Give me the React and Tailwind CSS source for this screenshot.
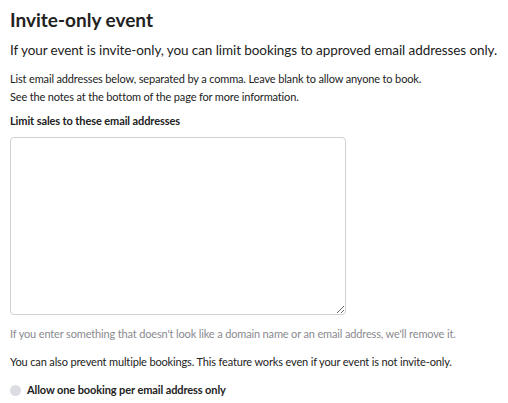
import React from 'react';

export default function App() {
  return (
    <div className="bg-white min-h-[403px] px-[10px] pt-[8px] text-[#222]" style={{ fontFamily: 'Lato, "Noto Sans", sans-serif' }}>
      <h1 className="text-[19px] font-bold leading-[24px] text-[#222]">Invite-only event</h1>
      <p className="mt-[8px] text-[13.5px] leading-[20px] tracking-[-0.08px]">
        If your event is invite-only, you can limit bookings to approved email addresses only.
      </p>

      <div className="mt-[10px] text-[11px] leading-[18px] tracking-[-0.15px]">
        <p>List email addresses below, separated by a comma. Leave blank to allow anyone to book.</p>
        <p>See the notes at the bottom of the page for more information.</p>
      </div>

      <label className="block mt-[7px] text-[11px] font-bold leading-[16px] tracking-[-0.1px]">Limit sales to these email addresses</label>
      <textarea className="block mt-[8px] w-[336px] h-[178px] border border-[#cfd0d4] rounded-[4px] bg-white outline-none resize-y" />

      <p className="mt-[10px] text-[11px] leading-[18px] tracking-[-0.15px] text-[#8a8a8f]">
        If you enter something that doesn't look like a domain name or an email address, we'll remove it.
      </p>
      <p className="mt-[10px] text-[11px] leading-[18px] tracking-[-0.15px]">
        You can also prevent multiple bookings. This feature works even if your event is not invite-only.
      </p>

      <label className="mt-[10px] flex items-center gap-[6px] text-[11px] font-bold leading-[18px] tracking-[-0.1px]">
        <span className="w-[11px] h-[11px] rounded-full bg-[#dcdde2] shrink-0" />
        Allow one booking per email address only
      </label>
    </div>
  );
}
